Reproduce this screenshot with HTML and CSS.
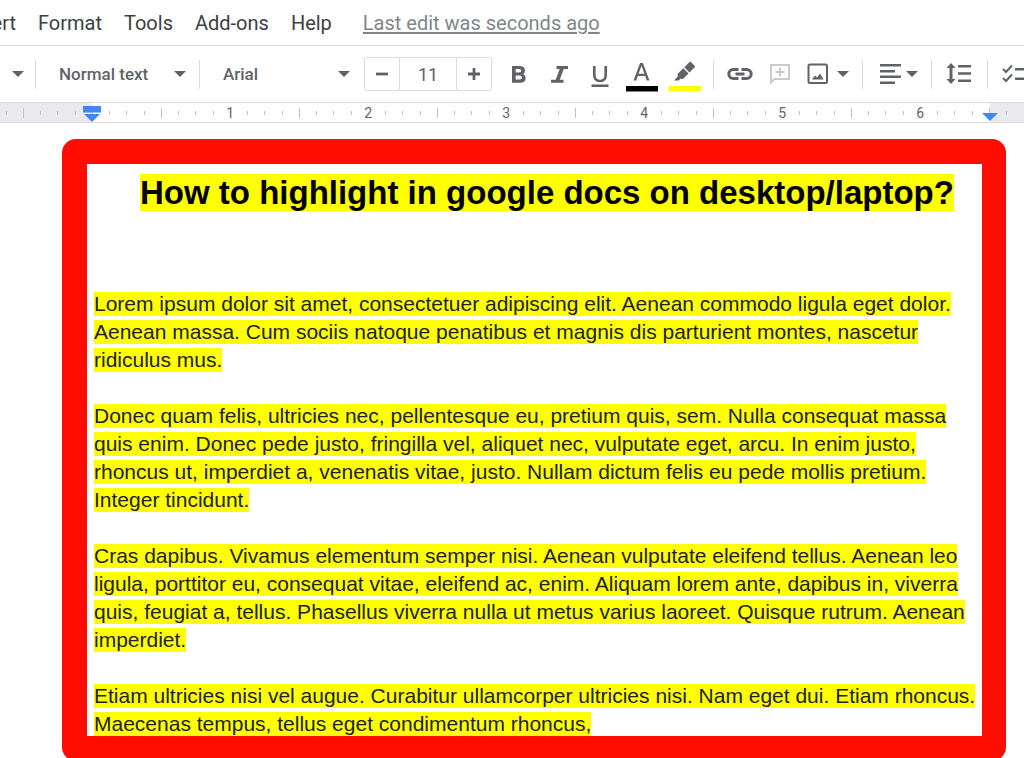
FILE: index.html
```html
<!DOCTYPE html>
<html lang="en">
<head>
<meta charset="utf-8">
<title>How to highlight in google docs</title>
<link rel="stylesheet" href="styles.css">
</head>
<body>
<header>
  <nav class="menubar" aria-label="Menu">
    <button class="menu menu-cut">Insert</button>
    <button class="menu">Format</button>
    <button class="menu">Tools</button>
    <button class="menu">Add-ons</button>
    <button class="menu">Help</button>
    <a class="last-edit" href="#history">Last edit was seconds ago</a>
  </nav>
  <div class="toolbar" role="toolbar" aria-label="Formatting">
    <div class="group group-zoom"><button class="tool" aria-label="Zoom"><svg class="caret" viewBox="0 0 12 6"><path d="M0 0h12L6 6z"/></svg></button></div>
    <div class="group group-style"><button class="picker">Normal text<svg class="caret" viewBox="0 0 12 6"><path d="M0 0h12L6 6z"/></svg></button></div>
    <div class="group group-font">
      <button class="picker">Arial<svg class="caret" viewBox="0 0 12 6"><path d="M0 0h12L6 6z"/></svg></button>
      <div class="size">
        <button class="step" aria-label="Decrease font size"><svg width="12" height="12" viewBox="0 0 12 12"><path d="M0 4.600h12v2.800H0z"/></svg></button>
        <input class="size-value" aria-label="Font size" value="11">
        <button class="step" aria-label="Increase font size"><svg width="12" height="12" viewBox="0 0 12 12"><path d="M0 4.600h4.600V0h2.800v4.600H12v2.800H7.400V12H4.600V7.400H0z"/></svg></button>
      </div>
      <button class="tool" aria-label="Bold"><svg width="32" height="36" viewBox="0 0 32 36"><path fill-rule="evenodd" d="M9 10h7.500q5.500 0 5.500 4.600 0 2.400-2 3.400 2.700 1 2.700 4 0 4.700-5.700 4.700H9zM12.700 13v3.600h3.200q2.400 0 2.400-1.800T15.900 13zM12.700 19.600v4h3.800q2.500 0 2.500-2t-2.500-2z"/></svg></button>
      <button class="tool" aria-label="Italic"><svg width="32" height="36" viewBox="0 0 32 36"><path d="M12.500 10H24v3h-4.300l-4 10.800h3.800v3H7v-3h4.700l4-10.800h-3.200z"/></svg></button>
      <button class="tool" aria-label="Underline"><svg width="32" height="36" viewBox="0 0 32 36"><path d="M8 10h2.600v9q0 4.700 4.400 4.700t4.400-4.700v-9H22v9q0 7.200-7 7.200T8 19zM6.500 28.500h17V31h-17z"/></svg></button>
      <button class="tool" aria-label="Text color"><svg width="32" height="36" viewBox="0 0 32 36"><path fill-rule="evenodd" d="M7.500 24.500l6.600-17.500h2.800l6.600 17.500h-2.700l-1.600-4.500h-7.400l-1.600 4.500zM12.600 17.700h5.800l-2.900-8z"/><path class="ink-black" d="M0 30h32v5.500H0z"/></svg></button>
      <button class="tool tool-marker" aria-label="Highlight color"><svg width="32" height="36" viewBox="0 0 32 36"><path d="M20.500 6q.7-.7 1.400 0l3.800 3.800q.7.700 0 1.400L20.500 16.400 15.300 11.200zM14.300 12.200l5.200 5.200-5 5q-1.500 1.300-3 .2l-1.800 1.900H5l4-4.300q-1.200-1.500.2-3z"/><path class="ink-yellow" d="M0 30h32v5.500H0z"/></svg></button>
    </div>
    <div class="group group-insert">
      <button class="tool" aria-label="Insert link"><svg width="28" height="28" viewBox="0 0 28 28"><path class="line" d="M12.500 9.500H7.300a4.500 4.500 0 000 9h5.200M15.500 9.500h5.200a4.500 4.500 0 010 9h-5.200M9.500 14h9"/></svg></button>
      <button class="tool faded" aria-label="Add comment"><svg width="28" height="28" viewBox="0 0 28 28"><path class="thin" d="M5 22.500V5h18v14H8.500z"/><path class="thin" d="M14 7.500v9M9.500 12h9"/></svg></button>
      <button class="tool tool-image" aria-label="Insert image"><svg width="24" height="28" viewBox="0 0 24 28"><rect class="thin" x="2.500" y="4.500" width="18.500" height="18.500" rx="1.500"/><path d="M6 19.500l3-4 2 2 3-4 3.500 6z"/></svg><svg class="caret" viewBox="0 0 12 6"><path d="M0 0h12L6 6z"/></svg></button>
    </div>
    <div class="group group-align"><button class="tool tool-align" aria-label="Align"><svg width="24" height="28" viewBox="0 0 24 28"><path d="M2 4h21v2.500H2zM2 10h15v2.500H2zM2 15.500h21V18H2zM2 21.500h15V24H2z"/></svg><svg class="caret" viewBox="0 0 12 6"><path d="M0 0h12L6 6z"/></svg></button></div>
    <div class="group group-spacing"><button class="tool" aria-label="Line spacing"><svg width="28" height="28" viewBox="0 0 28 28"><path d="M6 3l4.500 5H7.500v11h3L6 24l-4.500-5h3V8h-3zM13 5h13v2.500H13zM13 12.200h13v2.600H13zM13 19.500h13V22H13z"/></svg></button></div>
    <div class="group group-list"><button class="tool" aria-label="Checklist"><svg width="28" height="28" viewBox="0 0 28 28"><path class="thin" d="M2 9l3 3 6-6.500M2 18l3 3 6-6.500"/><path d="M14 8h13v2.500H14zM14 17.500h13V20H14z"/></svg></button></div>
  </div>
  <div class="ruler" id="ruler">
    <svg class="indent indent-left" width="18" height="17" viewBox="0 0 18 17"><path d="M0 0h18v6.500H0zM1 8h16l-8 8z"/></svg>
    <svg class="indent indent-right" width="16" height="8" viewBox="0 0 16 8"><path d="M0 0h16L8 8z"/></svg>
  </div>
</header>
<main class="workspace">
  <article class="frame">
    <h1><mark>How to highlight in google docs on desktop/laptop?</mark></h1>
    <p><mark>Lorem ipsum dolor sit amet, consectetuer adipiscing elit. Aenean commodo ligula eget dolor.<br>Aenean massa. Cum sociis natoque penatibus et magnis dis parturient montes, nascetur<br>ridiculus mus.</mark></p>
    <p><mark>Donec quam felis, ultricies nec, pellentesque eu, pretium quis, sem. Nulla consequat massa<br>quis enim. Donec pede justo, fringilla vel, aliquet nec, vulputate eget, arcu. In enim justo,<br>rhoncus ut, imperdiet a, venenatis vitae, justo. Nullam dictum felis eu pede mollis pretium.<br>Integer tincidunt.</mark></p>
    <p><mark>Cras dapibus. Vivamus elementum semper nisi. Aenean vulputate eleifend tellus. Aenean leo<br>ligula, porttitor eu, consequat vitae, eleifend ac, enim. Aliquam lorem ante, dapibus in, viverra<br>quis, feugiat a, tellus. Phasellus viverra nulla ut metus varius laoreet. Quisque rutrum. Aenean<br>imperdiet.</mark></p>
    <p><mark>Etiam ultricies nisi vel augue. Curabitur ullamcorper ultricies nisi. Nam eget dui. Etiam rhoncus.<br>Maecenas tempus, tellus eget condimentum rhoncus,</mark></p>
  </article>
</main>
<script src="ruler.js"></script>
</body>
</html>
```

FILE: styles.css
```css
* { box-sizing: border-box; }
body { margin: 0; background: #fff; font-family: Roboto, "Liberation Sans", sans-serif; overflow: hidden; }
button, input { font: inherit; color: inherit; background: none; border: 0; padding: 0; margin: 0; }
svg { display: block; flex: none; fill: #5f6368; }

.menubar { display: flex; align-items: center; gap: 22px; height: 46px; border-bottom: 1px solid #dadce0; font-size: 20px; color: #3c4043; white-space: nowrap; overflow: hidden; }
.menu-cut { width: 16px; display: flex; justify-content: flex-end; }
.last-edit { color: #80868b; margin-left: 9px; text-underline-offset: 2px; }

.toolbar { display: flex; align-items: center; height: 57px; border-bottom: 1px solid #dadce0; color: #5f6368; font-size: 17px; font-weight: 500; overflow: hidden; }
.group { display: flex; align-items: center; height: 29px; flex: none; border-right: 1px solid #dadce0; }
.tool, .picker { display: flex; align-items: center; justify-content: space-between; flex: none; }
.caret { width: 12px; height: 6px; }
.group-zoom { width: 36px; padding-left: 12px; }
.group-style { width: 164px; padding: 0 13px 0 23px; }
.group-style .picker { width: 127px; }
.group-font { width: 514px; padding-left: 23px; gap: 9px; }
.group-font .picker { width: 127px; }
.size { display: flex; width: 128px; height: 34px; border: 1px solid #dadce0; border-radius: 3px; margin: 0 2px 0 5px; flex: none; }
.step { flex: 1; display: flex; align-items: center; justify-content: center; }
.size-value { width: 58px; text-align: center; border: solid #dadce0; border-width: 0 1px; font-size: 18px; font-weight: 400; }
.tool-marker { margin-left: 2px; }
.ink-black { fill: #000; }
.ink-yellow { fill: #ff0; }
.line { fill: none; stroke: #5f6368; stroke-width: 3; }
.thin { fill: none; stroke: #5f6368; stroke-width: 2; }
.faded .thin { stroke: #c8cacc; }
.group-insert { width: 149px; padding-left: 12px; gap: 12px; }
.tool-image { gap: 7px; }
.tool-align { gap: 4px; }
.group-align { width: 69px; padding-left: 15px; }
.group-spacing { width: 56px; padding-left: 13px; }
.group-list { width: 56px; padding-left: 13px; border: 0; }

.ruler { position: relative; display: flex; justify-content: space-between; align-items: center; height: 20px; padding: 0 17px 0 6px; border-bottom: 1px solid #dadce0; background: linear-gradient(to right, #e8eaed 92px, #fff 92px, #fff calc(100% - 34px), #e8eaed calc(100% - 34px)); font-size: 14px; color: #5f6368; }
.mark { display: flex; align-items: center; justify-content: center; width: 0; height: 16px; }
.mark::before { content: ""; flex: none; width: 1px; height: 4px; background: #bdc1c6; }
.mark-half::before { height: 10px; }
.mark-number::before { display: none; }
.indent { position: absolute; fill: #4285f4; }
.indent-left { left: 83px; top: 3px; }
.indent-right { right: 26px; top: 10px; }

.workspace { padding: 16px 18px 0 62px; font-family: "Liberation Sans", Arial, sans-serif; color: #222; }
.frame { border: 25px solid #ff0d00; border-right-width: 24px; border-radius: 14px; padding: 10px 0 0 7px; white-space: nowrap; }
h1 { margin: 0 0 78px; padding-left: 46px; font-size: 33px; line-height: 38px; color: #000; }
mark { background: #ff0; color: inherit; }
p { margin: 0 0 28px; font-size: 21px; line-height: 28px; }
p mark { padding-bottom: 1px; }
p:last-child { margin: 0 0 -2px; }
```

FILE: ruler.js
```js
// Eighth-inch marks from the left margin to the right one; zero is the left indent.
const ruler = document.getElementById("ruler");
for (let i = -5; i <= 53; i++) {
  const mark = document.createElement("span");
  mark.className = "mark";
  if (i > 0 && i % 8 === 0) {
    mark.classList.add("mark-number");
    mark.textContent = i / 8;
  } else if (i % 4 === 0) {
    mark.classList.add("mark-half");
  }
  ruler.append(mark);
}
```
